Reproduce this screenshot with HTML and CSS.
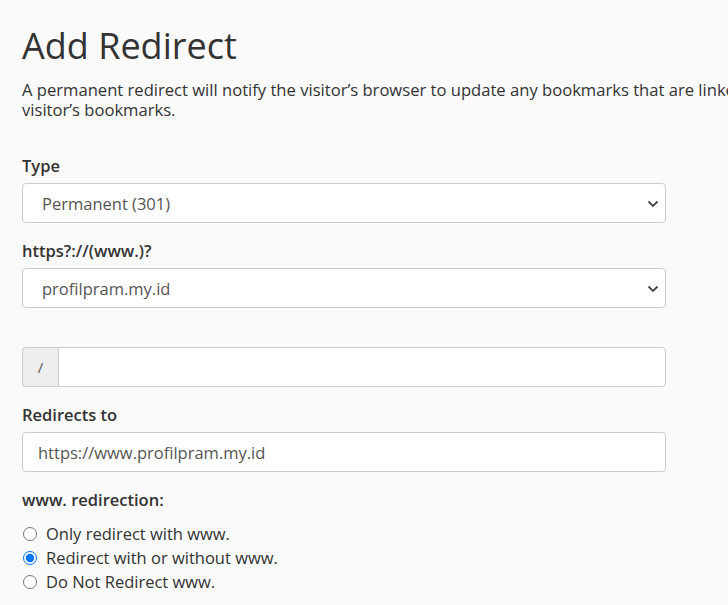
FILE: index.html
```html
<!DOCTYPE html>
<html>
<head>
<meta charset="utf-8">
<link rel="stylesheet" href="styles.css">
</head>
<body>
<div class="page">
  <h1 class="title">Add Redirect</h1>
  <p class="intro">A permanent redirect will notify the visitor’s browser to update any bookmarks that are linked to the page that is being redirected. Temporary redirects will not update the<br>visitor’s bookmarks.</p>

  <form class="form">
    <div class="group">
      <label class="label">Type</label>
      <div class="select-wrap">
        <select class="select"><option>Permanent (301)</option></select>
        <svg class="chev" width="12" height="8" viewBox="0 0 12 8"><path d="M1.5 1.5 L6 6 L10.5 1.5" fill="none" stroke="#444" stroke-width="1.8"/></svg>
      </div>
    </div>

    <div class="group">
      <label class="label">https?://(www.)?</label>
      <div class="select-wrap">
        <select class="select"><option>profilpram.my.id</option></select>
        <svg class="chev" width="12" height="8" viewBox="0 0 12 8"><path d="M1.5 1.5 L6 6 L10.5 1.5" fill="none" stroke="#444" stroke-width="1.8"/></svg>
      </div>
    </div>

    <div class="group spaced">
      <div class="input-group">
        <span class="addon">/</span>
        <input class="input joined" type="text">
      </div>
    </div>

    <div class="group">
      <label class="label">Redirects to</label>
      <input class="input" type="text" value="https://www.profilpram.my.id">
    </div>

    <div class="group">
      <div class="label">www. redirection:</div>
      <div class="radios">
        <label class="radio"><input type="radio" name="w"> Only redirect with www.</label>
        <label class="radio"><input type="radio" name="w" checked> Redirect with or without www.</label>
        <label class="radio"><input type="radio" name="w"> Do Not Redirect www.</label>
      </div>
    </div>
  </form>
</div>
</body>
</html>
```
FILE: styles.css
```css
html, body {
  margin: 0;
  padding: 0;
  background: #fafafa;
  overflow: hidden;
}
body {
  font-family: "Open Sans", "Liberation Sans", sans-serif;
  color: #333;
}
.page {
  padding: 22px 0 0 22px;
}
.title {
  font-size: 36px;
  font-weight: 400;
  margin: 0 0 10px 0;
  line-height: 48px;
  color: #333;
}
.intro {
  font-size: 16.6px;
  line-height: 20px;
  margin: 0 0 36px 0;
  white-space: nowrap;
}
.form {
  width: 644px;
}
.group {
  margin-bottom: 18px;
}
.group.spaced {
  margin-top: 39px;
}
.label {
  display: block;
  font-size: 16.5px;
  font-weight: 600;
  line-height: 20px;
  margin-bottom: 7px;
}
.select-wrap {
  position: relative;
}
.select {
  appearance: none;
  -webkit-appearance: none;
  width: 100%;
  height: 40px;
  border: 1px solid #ccc;
  border-radius: 4px;
  background: #fff;
  font-family: inherit;
  font-size: 16.5px;
  color: #555;
  padding: 0 19px;
  box-sizing: border-box;
}
.chev {
  position: absolute;
  right: 7px;
  top: 17px;
  pointer-events: none;
}
.input-group {
  display: flex;
  height: 40px;
}
.addon {
  width: 36px;
  box-sizing: border-box;
  display: flex;
  align-items: center;
  justify-content: center;
  background: #eee;
  border: 1px solid #ccc;
  border-right: none;
  border-radius: 4px 0 0 4px;
  font-size: 15px;
  color: #555;
}
.input {
  display: block;
  width: 100%;
  height: 40px;
  box-sizing: border-box;
  border: 1px solid #ccc;
  border-radius: 4px;
  background: #fff;
  font-family: inherit;
  font-size: 16.5px;
  color: #555;
  padding: 0 15px;
}
.input.joined {
  flex: 1;
  border-radius: 0 4px 4px 0;
}
.radios {
  display: flex;
  flex-direction: column;
  margin-top: 12px;
}
.radio {
  display: flex;
  align-items: center;
  font-size: 16.5px;
  line-height: 24px;
  color: #333;
}
.radio input {
  margin: 0 9px 0 1px;
  width: 14px;
  height: 14px;
}
```
